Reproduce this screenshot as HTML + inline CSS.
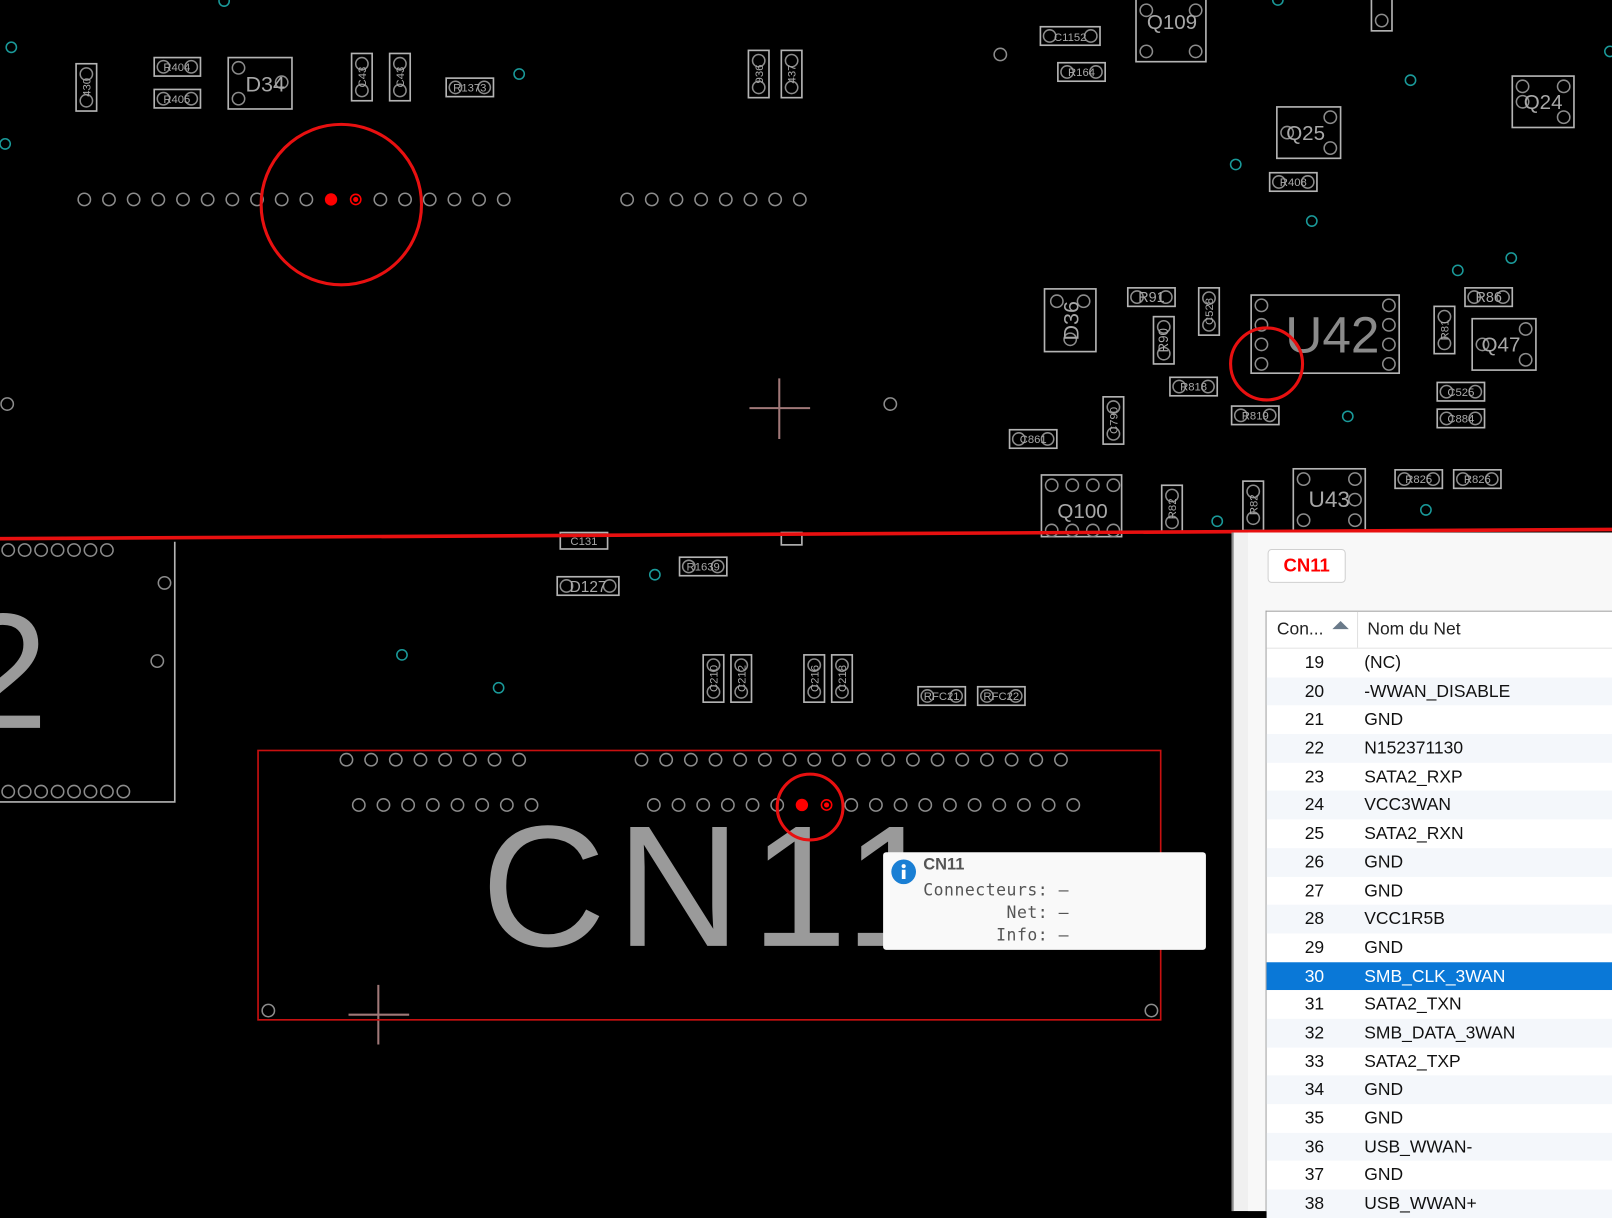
<!DOCTYPE html>
<html><head><meta charset="utf-8"><style>
html,body{margin:0;padding:0;background:#000;overflow:hidden;width:1612px;height:1211px}
#w{position:absolute;left:0;top:0;width:1568px;height:1178px;transform:scale(1.02806);transform-origin:0 0;font-family:"Liberation Sans",sans-serif}
svg{position:absolute;left:0;top:0}
.c{fill:none;stroke:#b4b4b4;stroke-width:1.6}
.p{fill:none;stroke:#8c8c8c;stroke-width:1.5}
.t{fill:none;stroke:#1a9a9a;stroke-width:1.5}
.l{fill:#a8a8a8;font-family:"Liberation Sans",sans-serif;font-size:11px;text-anchor:middle}
#panel{position:absolute;left:1198px;top:518px;width:370px;height:660px;background:#f0f0f0;border-left:2px solid #8a8a8a}
#inner{position:absolute;left:14px;top:0;right:0;bottom:0;background:#f8f8f8}
#btn{position:absolute;left:33px;top:16px;width:74px;height:31px;background:#fff;border:1px solid #d0d0d0;border-radius:4px;color:#f00;font-weight:bold;font-size:18px;line-height:31px;text-align:center}
#tbl{position:absolute;left:31px;top:76px;right:0;bottom:0;background:#fff;border:1px solid #a0a0a0;border-right:none;border-bottom:none}
#hd{height:35px;border-bottom:1px solid #e4e4e4;position:relative;font-size:17px;color:#222}
.r{height:27.7px;position:relative;font-size:17px;color:#111;line-height:27.7px}
.r.a{background:#f4f7fb}.r.s{background:#0a78d7;color:#fff}
.n{position:absolute;left:0;width:56px;text-align:right}.m{position:absolute;left:95px}
#tip{position:absolute;left:859px;top:829px;width:314px;height:95px;background:#f9f9f9;border-radius:3px}
#tip .mono{font-family:"DejaVu Sans Mono","Liberation Mono",monospace;font-size:16px;letter-spacing:0.5px;color:#555;position:absolute;white-space:pre}
</style></head><body><div id="w">
<svg width="1568" height="1178" viewBox="0 0 1568 1178">
<g class="p">
<circle cx="82" cy="194" r="6"/><circle cx="106" cy="194" r="6"/><circle cx="130" cy="194" r="6"/><circle cx="154" cy="194" r="6"/><circle cx="178" cy="194" r="6"/><circle cx="202" cy="194" r="6"/><circle cx="226" cy="194" r="6"/><circle cx="250" cy="194" r="6"/><circle cx="274" cy="194" r="6"/><circle cx="298" cy="194" r="6"/><circle cx="370" cy="194" r="6"/><circle cx="394" cy="194" r="6"/><circle cx="418" cy="194" r="6"/><circle cx="442" cy="194" r="6"/><circle cx="466" cy="194" r="6"/><circle cx="490" cy="194" r="6"/>
<circle cx="610" cy="194" r="6"/><circle cx="634" cy="194" r="6"/><circle cx="658" cy="194" r="6"/><circle cx="682" cy="194" r="6"/><circle cx="706" cy="194" r="6"/><circle cx="730" cy="194" r="6"/><circle cx="754" cy="194" r="6"/><circle cx="778" cy="194" r="6"/>
<circle cx="973" cy="53" r="6"/><circle cx="866" cy="393" r="6"/><circle cx="7" cy="393" r="6"/>
</g>
<circle cx="322" cy="194" r="6" fill="#f00"/><circle cx="346" cy="194" r="5" fill="none" stroke="#f00" stroke-width="1.5"/><circle cx="346" cy="194" r="2.5" fill="#f00"/>
<circle cx="332" cy="199" r="78" fill="none" stroke="#e81010" stroke-width="3"/>
<g class="t">
<circle cx="11" cy="46" r="5"/><circle cx="5" cy="140" r="5"/><circle cx="505" cy="72" r="5"/><circle cx="218" cy="1" r="5"/><circle cx="1372" cy="78" r="5"/><circle cx="1202" cy="160" r="5"/><circle cx="1276" cy="215" r="5"/><circle cx="1418" cy="263" r="5"/><circle cx="1470" cy="251" r="5"/><circle cx="1311" cy="405" r="5"/><circle cx="1387" cy="496" r="5"/><circle cx="1184" cy="507" r="5"/><circle cx="1243" cy="0" r="5"/><circle cx="1566" cy="50" r="5"/><circle cx="637" cy="559" r="5"/><circle cx="391" cy="637" r="5"/><circle cx="485" cy="669" r="5"/>
</g>
<g stroke="#a07878" stroke-width="2"><path d="M729 397H788M758 368V427"/><path d="M339 987H398M368 958V1016"/></g>
<g>
<g class="c">
<rect x="150" y="56" width="45" height="18"/><rect x="150" y="87" width="45" height="18"/><rect x="434" y="76" width="46" height="18"/><rect x="1012" y="26" width="58" height="18"/><rect x="1029" y="61" width="46" height="18"/><rect x="1235" y="168" width="46" height="18"/><rect x="1097" y="280" width="46" height="18"/><rect x="1138" y="367" width="46" height="18"/><rect x="1198" y="395" width="46" height="18"/><rect x="1425" y="280" width="46" height="18"/><rect x="1398" y="372" width="46" height="18"/><rect x="1398" y="398" width="46" height="18"/><rect x="982" y="418" width="46" height="18"/><rect x="1357" y="457" width="46" height="18"/><rect x="1414" y="457" width="46" height="18"/><rect x="545" y="518" width="46" height="16"/><rect x="542" y="561" width="60" height="18"/><rect x="661" y="542" width="46" height="18"/><rect x="893" y="668" width="46" height="18"/><rect x="951" y="668" width="46" height="18"/><rect x="760" y="518" width="20" height="12"/>
</g>
<g class="p">
<circle cx="159" cy="65" r="6"/><circle cx="186" cy="65" r="6"/><circle cx="159" cy="96" r="6"/><circle cx="186" cy="96" r="6"/><circle cx="443" cy="85" r="6"/><circle cx="471" cy="85" r="6"/><circle cx="1021" cy="35" r="6"/><circle cx="1061" cy="35" r="6"/><circle cx="1038" cy="70" r="6"/><circle cx="1066" cy="70" r="6"/><circle cx="1244" cy="177" r="6"/><circle cx="1272" cy="177" r="6"/><circle cx="1106" cy="289" r="6"/><circle cx="1134" cy="289" r="6"/><circle cx="1147" cy="376" r="6"/><circle cx="1175" cy="376" r="6"/><circle cx="1207" cy="404" r="6"/><circle cx="1235" cy="404" r="6"/><circle cx="1434" cy="289" r="6"/><circle cx="1462" cy="289" r="6"/><circle cx="1407" cy="381" r="6"/><circle cx="1435" cy="381" r="6"/><circle cx="1407" cy="407" r="6"/><circle cx="1435" cy="407" r="6"/><circle cx="991" cy="427" r="6"/><circle cx="1019" cy="427" r="6"/><circle cx="1366" cy="466" r="6"/><circle cx="1394" cy="466" r="6"/><circle cx="1423" cy="466" r="6"/><circle cx="1451" cy="466" r="6"/><circle cx="551" cy="570" r="6"/><circle cx="593" cy="570" r="6"/><circle cx="670" cy="551" r="6"/><circle cx="698" cy="551" r="6"/><circle cx="902" cy="677" r="6"/><circle cx="930" cy="677" r="6"/><circle cx="960" cy="677" r="6"/><circle cx="988" cy="677" r="6"/>
</g>
<g class="l">
<text x="172" y="69">R404</text><text x="172" y="100">R405</text><text x="457" y="89">R1373</text><text x="1041" y="40">C1152</text><text x="1052" y="74">R164</text><text x="1258" y="181">R408</text><text x="1120" y="294" font-size="14">R91</text><text x="1161" y="380">R818</text><text x="1221" y="408">R819</text><text x="1448" y="294" font-size="14">R86</text><text x="1421" y="385">C525</text><text x="1421" y="411">C884</text><text x="1005" y="431">C861</text><text x="1380" y="470">R825</text><text x="1437" y="470">R826</text><text x="568" y="530">C131</text><text x="572" y="576" font-size="15">D127</text><text x="684" y="555">R1639</text><text x="916" y="681">RFC21</text><text x="974" y="681">RFC22</text>
</g>
</g>
<g class="c">
<rect x="74" y="62" width="20" height="46"/><rect x="342" y="52" width="20" height="46"/><rect x="379" y="52" width="20" height="46"/><rect x="728" y="49" width="20" height="46"/><rect x="760" y="49" width="20" height="46"/><rect x="1334" y="-10" width="20" height="40"/><rect x="1166" y="280" width="20" height="46"/><rect x="1122" y="308" width="20" height="46"/><rect x="1395" y="298" width="20" height="46"/><rect x="1073" y="386" width="20" height="46"/><rect x="1130" y="472" width="20" height="46"/><rect x="1209" y="468" width="20" height="48"/><rect x="684" y="637" width="20" height="46"/><rect x="711" y="637" width="20" height="46"/><rect x="782" y="637" width="20" height="46"/><rect x="809" y="637" width="20" height="46"/>
</g>
<g class="p">
<circle cx="84" cy="72" r="6"/><circle cx="84" cy="98" r="6"/><circle cx="352" cy="62" r="6"/><circle cx="352" cy="88" r="6"/><circle cx="389" cy="62" r="6"/><circle cx="389" cy="88" r="6"/><circle cx="738" cy="59" r="6"/><circle cx="738" cy="85" r="6"/><circle cx="770" cy="59" r="6"/><circle cx="770" cy="85" r="6"/><circle cx="1344" cy="20" r="6"/><circle cx="1176" cy="290" r="6"/><circle cx="1176" cy="316" r="6"/><circle cx="1132" cy="318" r="6"/><circle cx="1132" cy="344" r="6"/><circle cx="1405" cy="308" r="6"/><circle cx="1405" cy="334" r="6"/><circle cx="1083" cy="396" r="6"/><circle cx="1083" cy="422" r="6"/><circle cx="1140" cy="482" r="6"/><circle cx="1140" cy="508" r="6"/><circle cx="1219" cy="478" r="6"/><circle cx="1219" cy="504" r="6"/><circle cx="694" cy="647" r="6"/><circle cx="694" cy="673" r="6"/><circle cx="721" cy="647" r="6"/><circle cx="721" cy="673" r="6"/><circle cx="792" cy="647" r="6"/><circle cx="792" cy="673" r="6"/><circle cx="819" cy="647" r="6"/><circle cx="819" cy="673" r="6"/>
</g>
<g class="l" font-size="10">
<text transform="translate(88,85) rotate(-90)">430</text><text transform="translate(356,75) rotate(-90)">C43</text><text transform="translate(393,75) rotate(-90)">C43</text><text transform="translate(742,72) rotate(-90)">936</text><text transform="translate(774,72) rotate(-90)">437</text><text transform="translate(1180,303) rotate(-90)">C528</text><text transform="translate(1136,331) rotate(-90)" font-size="13">R90</text><text transform="translate(1409,321) rotate(-90)">R81</text><text transform="translate(1087,409) rotate(-90)">C790</text><text transform="translate(1144,495) rotate(-90)">R82</text><text transform="translate(1223,491) rotate(-90)">R82</text><text transform="translate(698,660) rotate(-90)">C210</text><text transform="translate(725,660) rotate(-90)">C212</text><text transform="translate(796,660) rotate(-90)">C216</text><text transform="translate(823,660) rotate(-90)">C218</text>
</g>
<g class="c">
<rect x="222" y="56" width="62" height="50"/><rect x="1105" y="-5" width="68" height="65"/><rect x="1471" y="74" width="60" height="50"/><rect x="1242" y="104" width="62" height="50"/><rect x="1016" y="281" width="50" height="61"/><rect x="1217" y="287" width="144" height="76"/><rect x="1432" y="310" width="62" height="50"/><rect x="1013" y="462" width="78" height="60"/><rect x="1258" y="456" width="70" height="60"/>
</g>
<g class="p">
<circle cx="232" cy="66" r="6"/><circle cx="274" cy="80" r="6"/><circle cx="232" cy="96" r="6"/>
<circle cx="1115" cy="10" r="6"/><circle cx="1163" cy="10" r="6"/><circle cx="1115" cy="50" r="6"/><circle cx="1163" cy="50" r="6"/>
<circle cx="1481" cy="84" r="6"/><circle cx="1521" cy="84" r="6"/><circle cx="1521" cy="114" r="6"/><circle cx="1481" cy="99" r="6"/>
<circle cx="1252" cy="129" r="6"/><circle cx="1294" cy="114" r="6"/><circle cx="1294" cy="144" r="6"/>
<circle cx="1028" cy="293" r="6"/><circle cx="1054" cy="293" r="6"/><circle cx="1041" cy="330" r="6"/>
<circle cx="1227" cy="297" r="6"/><circle cx="1227" cy="316" r="6"/><circle cx="1227" cy="335" r="6"/><circle cx="1227" cy="354" r="6"/><circle cx="1351" cy="297" r="6"/><circle cx="1351" cy="316" r="6"/><circle cx="1351" cy="335" r="6"/><circle cx="1351" cy="354" r="6"/>
<circle cx="1442" cy="335" r="6"/><circle cx="1484" cy="320" r="6"/><circle cx="1484" cy="350" r="6"/>
<circle cx="1023" cy="472" r="6"/><circle cx="1043" cy="472" r="6"/><circle cx="1063" cy="472" r="6"/><circle cx="1083" cy="472" r="6"/><circle cx="1023" cy="516" r="6"/><circle cx="1043" cy="516" r="6"/><circle cx="1063" cy="516" r="6"/><circle cx="1083" cy="516" r="6"/>
<circle cx="1268" cy="466" r="6"/><circle cx="1318" cy="466" r="6"/><circle cx="1318" cy="486" r="6"/><circle cx="1268" cy="506" r="6"/><circle cx="1318" cy="506" r="6"/>
</g>
<g class="l">
<text x="258" y="89" font-size="21">D34</text><text x="1140" y="28" font-size="20">Q109</text><text x="1501" y="106" font-size="20">Q24</text><text x="1270" y="136" font-size="20">Q25</text><text transform="translate(1049,312) rotate(-90)" font-size="21">D36</text><text x="1296" y="343" font-size="50" fill="#8a8a8a">U42</text><text x="1460" y="342" font-size="20">Q47</text><text x="1053" y="504" font-size="20">Q100</text><text x="1293" y="493" font-size="22">U43</text>
</g>
<circle cx="1232" cy="354" r="35" fill="none" stroke="#e81010" stroke-width="3"/>
<path d="M170 527V780H0" class="c"/>
<g class="p">
<circle cx="8" cy="535" r="6"/><circle cx="24" cy="535" r="6"/><circle cx="40" cy="535" r="6"/><circle cx="56" cy="535" r="6"/><circle cx="72" cy="535" r="6"/><circle cx="88" cy="535" r="6"/><circle cx="104" cy="535" r="6"/>
<circle cx="8" cy="770" r="6"/><circle cx="24" cy="770" r="6"/><circle cx="40" cy="770" r="6"/><circle cx="56" cy="770" r="6"/><circle cx="72" cy="770" r="6"/><circle cx="88" cy="770" r="6"/><circle cx="104" cy="770" r="6"/><circle cx="120" cy="770" r="6"/>
<circle cx="160" cy="567" r="6"/><circle cx="153" cy="643" r="6"/>
</g>
<text x="-42" y="708" font-size="160" fill="#9a9a9a" font-family="Liberation Sans">2</text>
<text x="468" y="920" font-size="168" letter-spacing="10" fill="#9a9a9a" font-family="Liberation Sans">CN11</text>
<rect x="251" y="730" width="878" height="262" fill="none" stroke="#c81010" stroke-width="1.6"/>
<g class="p">
<circle cx="337" cy="739" r="6"/><circle cx="361" cy="739" r="6"/><circle cx="385" cy="739" r="6"/><circle cx="409" cy="739" r="6"/><circle cx="433" cy="739" r="6"/><circle cx="457" cy="739" r="6"/><circle cx="481" cy="739" r="6"/><circle cx="505" cy="739" r="6"/>
<circle cx="624" cy="739" r="6"/><circle cx="648" cy="739" r="6"/><circle cx="672" cy="739" r="6"/><circle cx="696" cy="739" r="6"/><circle cx="720" cy="739" r="6"/><circle cx="744" cy="739" r="6"/><circle cx="768" cy="739" r="6"/><circle cx="792" cy="739" r="6"/><circle cx="816" cy="739" r="6"/><circle cx="840" cy="739" r="6"/><circle cx="864" cy="739" r="6"/><circle cx="888" cy="739" r="6"/><circle cx="912" cy="739" r="6"/><circle cx="936" cy="739" r="6"/><circle cx="960" cy="739" r="6"/><circle cx="984" cy="739" r="6"/><circle cx="1008" cy="739" r="6"/><circle cx="1032" cy="739" r="6"/>
<circle cx="349" cy="783" r="6"/><circle cx="373" cy="783" r="6"/><circle cx="397" cy="783" r="6"/><circle cx="421" cy="783" r="6"/><circle cx="445" cy="783" r="6"/><circle cx="469" cy="783" r="6"/><circle cx="493" cy="783" r="6"/><circle cx="517" cy="783" r="6"/>
<circle cx="636" cy="783" r="6"/><circle cx="660" cy="783" r="6"/><circle cx="684" cy="783" r="6"/><circle cx="708" cy="783" r="6"/><circle cx="732" cy="783" r="6"/><circle cx="756" cy="783" r="6"/><circle cx="828" cy="783" r="6"/><circle cx="852" cy="783" r="6"/><circle cx="876" cy="783" r="6"/><circle cx="900" cy="783" r="6"/><circle cx="924" cy="783" r="6"/><circle cx="948" cy="783" r="6"/><circle cx="972" cy="783" r="6"/><circle cx="996" cy="783" r="6"/><circle cx="1020" cy="783" r="6"/><circle cx="1044" cy="783" r="6"/>
<circle cx="261" cy="983" r="6"/><circle cx="1120" cy="983" r="6"/>
</g>
<circle cx="780" cy="783" r="6" fill="#f00"/><circle cx="804" cy="783" r="5" fill="none" stroke="#f00" stroke-width="1.5"/><circle cx="804" cy="783" r="2.5" fill="#f00"/>
<circle cx="788" cy="785" r="32" fill="none" stroke="#e81010" stroke-width="3"/>
<path d="M0 524L1568 515" stroke="#e81010" stroke-width="3.5"/>
</svg>
<div id="tip">
<svg width="26" height="26" style="left:7px;top:6px"><circle cx="13" cy="13" r="12" fill="#1a7fd4"/><circle cx="13" cy="7.5" r="2" fill="#fff"/><rect x="11.2" y="11" width="3.6" height="9" fill="#fff"/></svg>
<div style="position:absolute;left:39px;top:4px;font-weight:bold;font-size:16px;color:#555">CN11</div>
<div class="mono" style="left:39px;top:27px">Connecteurs: —</div>
<div class="mono" style="left:39px;top:49px">        Net: —</div>
<div class="mono" style="left:39px;top:71px">       Info: —</div>
</div>
<div id="panel"><div id="inner"></div>
<div id="btn">CN11</div>
<div id="tbl">
<div id="hd"><span style="position:absolute;left:10px;top:7px">Con...</span><svg width="18" height="10" style="left:63px;top:8px"><path d="M1 9L9 1L17 9Z" fill="#6a7a8a"/></svg><div style="position:absolute;left:88px;top:0;height:35px;border-left:1px solid #e0e0e0"></div><span style="position:absolute;left:98px;top:7px">Nom du Net</span></div>
<div class="r"><span class="n">19</span><span class="m">(NC)</span></div>
<div class="r a"><span class="n">20</span><span class="m">-WWAN_DISABLE</span></div>
<div class="r"><span class="n">21</span><span class="m">GND</span></div>
<div class="r a"><span class="n">22</span><span class="m">N152371130</span></div>
<div class="r"><span class="n">23</span><span class="m">SATA2_RXP</span></div>
<div class="r a"><span class="n">24</span><span class="m">VCC3WAN</span></div>
<div class="r"><span class="n">25</span><span class="m">SATA2_RXN</span></div>
<div class="r a"><span class="n">26</span><span class="m">GND</span></div>
<div class="r"><span class="n">27</span><span class="m">GND</span></div>
<div class="r a"><span class="n">28</span><span class="m">VCC1R5B</span></div>
<div class="r"><span class="n">29</span><span class="m">GND</span></div>
<div class="r s"><span class="n">30</span><span class="m">SMB_CLK_3WAN</span></div>
<div class="r"><span class="n">31</span><span class="m">SATA2_TXN</span></div>
<div class="r a"><span class="n">32</span><span class="m">SMB_DATA_3WAN</span></div>
<div class="r"><span class="n">33</span><span class="m">SATA2_TXP</span></div>
<div class="r a"><span class="n">34</span><span class="m">GND</span></div>
<div class="r"><span class="n">35</span><span class="m">GND</span></div>
<div class="r a"><span class="n">36</span><span class="m">USB_WWAN-</span></div>
<div class="r"><span class="n">37</span><span class="m">GND</span></div>
<div class="r a"><span class="n">38</span><span class="m">USB_WWAN+</span></div>
</div></div>
</div></body></html>
